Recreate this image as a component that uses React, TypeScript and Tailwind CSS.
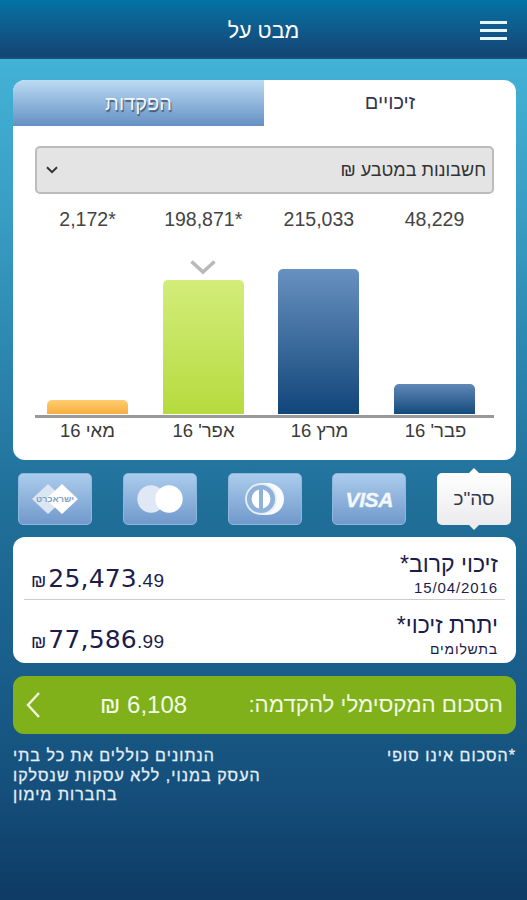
import clsx from "clsx";

const months = [
  { label: "פבר' 16", amount: "48,229", height: 30, color: "from-[#5f89b8] to-[#124a7d]" },
  { label: "מרץ 16", amount: "215,033", height: 145, color: "from-[#6791c0] to-[#0f467a]" },
  { label: "אפר' 16", amount: "198,871*", height: 134, color: "from-[#d3ed78] to-[#b6db3c]", selected: true },
  { label: "מאי 16", amount: "2,172*", height: 14, color: "from-[#fdcd70] to-[#f8ae3c]" },
];

const VisaLogo = () => (
  <span dir="ltr" className="text-[21px] font-bold italic leading-none tracking-[-0.4px] text-white/90 [-webkit-text-stroke:0.4px_#f4f8fc]">
    VISA
  </span>
);

const DinersLogo = () => (
  <svg width="40" height="34" viewBox="0 0 40 34">
    <path d="M17 1h5c10 0 17 7 17 16s-7 16-17 16h-5z" fill="#fff" fillOpacity=".95" />
    <circle cx="16" cy="17" r="15" fill="#8fb2da" stroke="#e6eff9" strokeWidth="1.8" />
    <path d="M14 7.5v19a9.8 9.8 0 0 1 0-19zM18 7.5v19a9.8 9.8 0 0 0 0-19z" fill="#fff" />
  </svg>
);

const MastercardLogo = () => (
  <svg width="46" height="28" viewBox="0 0 46 28">
    <circle cx="14" cy="14" r="13.7" fill="#dfe8f4" />
    <circle cx="32" cy="14" r="13.7" fill="#fff" />
  </svg>
);

const IsracardLogo = () => (
  <svg width="48" height="32" viewBox="0 0 48 32">
    <path d="M17 1l16 15-16 15L1 16z" fill="#dbe6f3" />
    <path d="M31 1l16 15-16 15-16-15z" fill="#fff" />
    <text x="24" y="19" textAnchor="middle" textLength="38" lengthAdjust="spacingAndGlyphs" fontFamily="Liberation Sans" fontSize="9" fontWeight="bold" fill="#7f9fc8">
      ישראכרט
    </text>
  </svg>
);

const cards = [VisaLogo, DinersLogo, MastercardLogo, IsracardLogo];

interface CreditRowProps {
  title: string;
  subtitle: string;
  whole: string;
  cents: string;
  first?: boolean;
}

const CreditRow = ({ title, subtitle, whole, cents, first }: CreditRowProps) => (
  <div className={clsx("flex h-[62px] items-start justify-between px-[7px] text-[#1b1c4b]", first ? "pt-[14px]" : "pt-[12px]")}>
    <div>
      <div className="text-[23px] leading-[26px]">{title}</div>
      <div className={clsx("leading-[22px]", first ? "text-[15px] tracking-[0.9px]" : "text-[14px] tracking-[0.8px]")}>{subtitle}</div>
    </div>
    <div dir="ltr" className="flex items-baseline pt-[10px] leading-[36px]">
      <span className="text-[18px]">₪</span>
      <span className="ml-[2px] font-['DejaVu_Sans'] text-[25px] tracking-[0.2px]">{whole}</span>
      <span className="text-[19px] tracking-[0.3px]">.{cents}</span>
    </div>
  </div>
);

export default function App() {
  return (
    <div
      dir="rtl"
      className="h-[900px] w-[527px] overflow-hidden bg-[linear-gradient(to_bottom,#42b2d5_59px,#3a9fc6_200px,#2b84ae_370px,#20709a_500px,#1a5f8c_660px,#154f7b_790px,#0e3c66_890px)] font-['Liberation_Sans',sans-serif]"
    >
      <header className="grid h-[59px] grid-cols-3 items-center border-b-2 border-[#19517e] bg-linear-to-b from-[#0373a5] to-[#124474] px-5 text-white">
        <div className="flex w-[27px] flex-col gap-[5px] pt-[3px]">
          <span className="h-[3px] bg-[#e6f6fc]" />
          <span className="h-[3px] bg-[#e6f6fc]" />
          <span className="h-[3px] bg-[#e6f6fc]" />
        </div>
        <h1 className="pt-1.5 text-center text-[21.5px] leading-none">מבט על</h1>
      </header>

      <main className="pl-[13px] pr-[11px] pt-[21px]">
        <section className="h-[380px] overflow-hidden rounded-[12px] bg-white">
          <div className="grid h-[46px] grid-cols-[252px_251px] text-[20px] leading-none">
            <button className="pb-[2px] text-[#34364f]">זיכויים</button>
            <button className="bg-linear-to-b from-[#bcdcf3] to-[#6590c4] pb-px text-[#f2f6fa] [text-shadow:1px_2px_1px_#44597a]">הפקדות</button>
          </div>

          <div className="px-[22px] pt-5">
            <div className="flex h-12 items-center justify-between rounded-[5px] border-2 border-[#bcbcbc] bg-[#e4e4e4] pl-[9px] pr-[6px] text-[18px] text-[#333]">
              <span>חשבונות במטבע ₪</span>
              <svg width="12" height="8" viewBox="0 0 12 8" fill="none" stroke="#333" strokeWidth="2">
                <path d="M1 1.2l5 5 5-5" />
              </svg>
            </div>

            <div className="flex justify-between border-b-[3px] border-[#999] pl-[12px] pr-[19px]">
              {months.map((m) => (
                <div key={m.label} className="flex h-[221px] w-[81px] flex-col items-center">
                  <div dir="ltr" className="pt-[14px] text-[19.5px] leading-[22px] text-[#444]">{m.amount}</div>
                  <div className="mb-px flex flex-1 flex-col items-center justify-end">
                    {m.selected && (
                      <svg className="mb-[5px]" width="26" height="15" viewBox="0 0 26 15" fill="none" stroke="#b9b9b9" strokeWidth="3.6">
                        <path d="M1.5 1.5L13 12 24.5 1.5" />
                      </svg>
                    )}
                    <div className={clsx("w-[81px] rounded-t-[5px] bg-linear-to-b", m.color)} style={{ height: m.height }} />
                  </div>
                </div>
              ))}
            </div>
            <div className="flex justify-between pl-[12px] pr-[18px] pt-px text-center text-[18.5px] leading-[24px] text-[#3a3a3a]">
              {months.map((m) => (
                <div key={m.label} className="w-[81px]">{m.label}</div>
              ))}
            </div>
          </div>
        </section>

        <nav className="flex justify-between px-[5px] pb-[12px] pt-[13px]">
          <button className="relative h-[52px] w-[74px] rounded-[5px] bg-linear-to-b from-white to-[#ebebee] text-[19px] text-[#34364f]">
            <svg className="absolute -top-[5px] left-[31px]" width="12" height="6" viewBox="0 0 12 6">
              <path d="M0 6l6-6 6 6z" fill="#fff" />
            </svg>
            סה"כ
            <svg className="absolute -bottom-[5px] left-[31px]" width="12" height="6" viewBox="0 0 12 6">
              <path d="M0 0l6 6 6-6z" fill="#ebebee" />
            </svg>
          </button>
          {cards.map((Logo, i) => (
            <button key={i} className="flex h-[52px] w-[74px] items-center justify-center rounded-[5px] border border-[#8db8dc] bg-linear-to-b from-[#abccec] to-[#7199cb]">
              <Logo />
            </button>
          ))}
        </nav>

        <section className="h-[126px] rounded-[12px] bg-white px-[11px]">
          <CreditRow title="זיכוי קרוב*" subtitle="15/04/2016" whole="25,473" cents="49" first />
          <div className="h-px bg-[#ccc]" />
          <CreditRow title="יתרת זיכוי*" subtitle="בתשלומים" whole="77,586" cents="99" />
        </section>

        <button className="mt-[13px] flex h-[58px] w-full items-center rounded-[11px] bg-[#80b01a] px-[13px] text-[#f4fbe6]">
          <span className="text-[22.3px]">הסכום המקסימלי להקדמה:</span>
          <span className="mr-auto text-[24px]">6,108 ₪</span>
          <svg className="mr-[60px]" width="14" height="26" viewBox="0 0 14 26" fill="none" stroke="#eef8dc" strokeWidth="2.4">
            <path d="M13 1L2 13l11 12" />
          </svg>
        </button>

        <footer className="flex justify-between pt-[12px] text-[16px] leading-[19.5px] tracking-[1.05px] text-[#e3eff7] [-webkit-text-stroke:0.3px_#e3eff7]">
          <p>*הסכום אינו סופי</p>
          <p className="text-left">
            הנתונים כוללים את כל בתי
            <br />
            העסק במנוי, ללא עסקות שנסלקו
            <br />
            בחברות מימון
          </p>
        </footer>
      </main>
    </div>
  );
}
